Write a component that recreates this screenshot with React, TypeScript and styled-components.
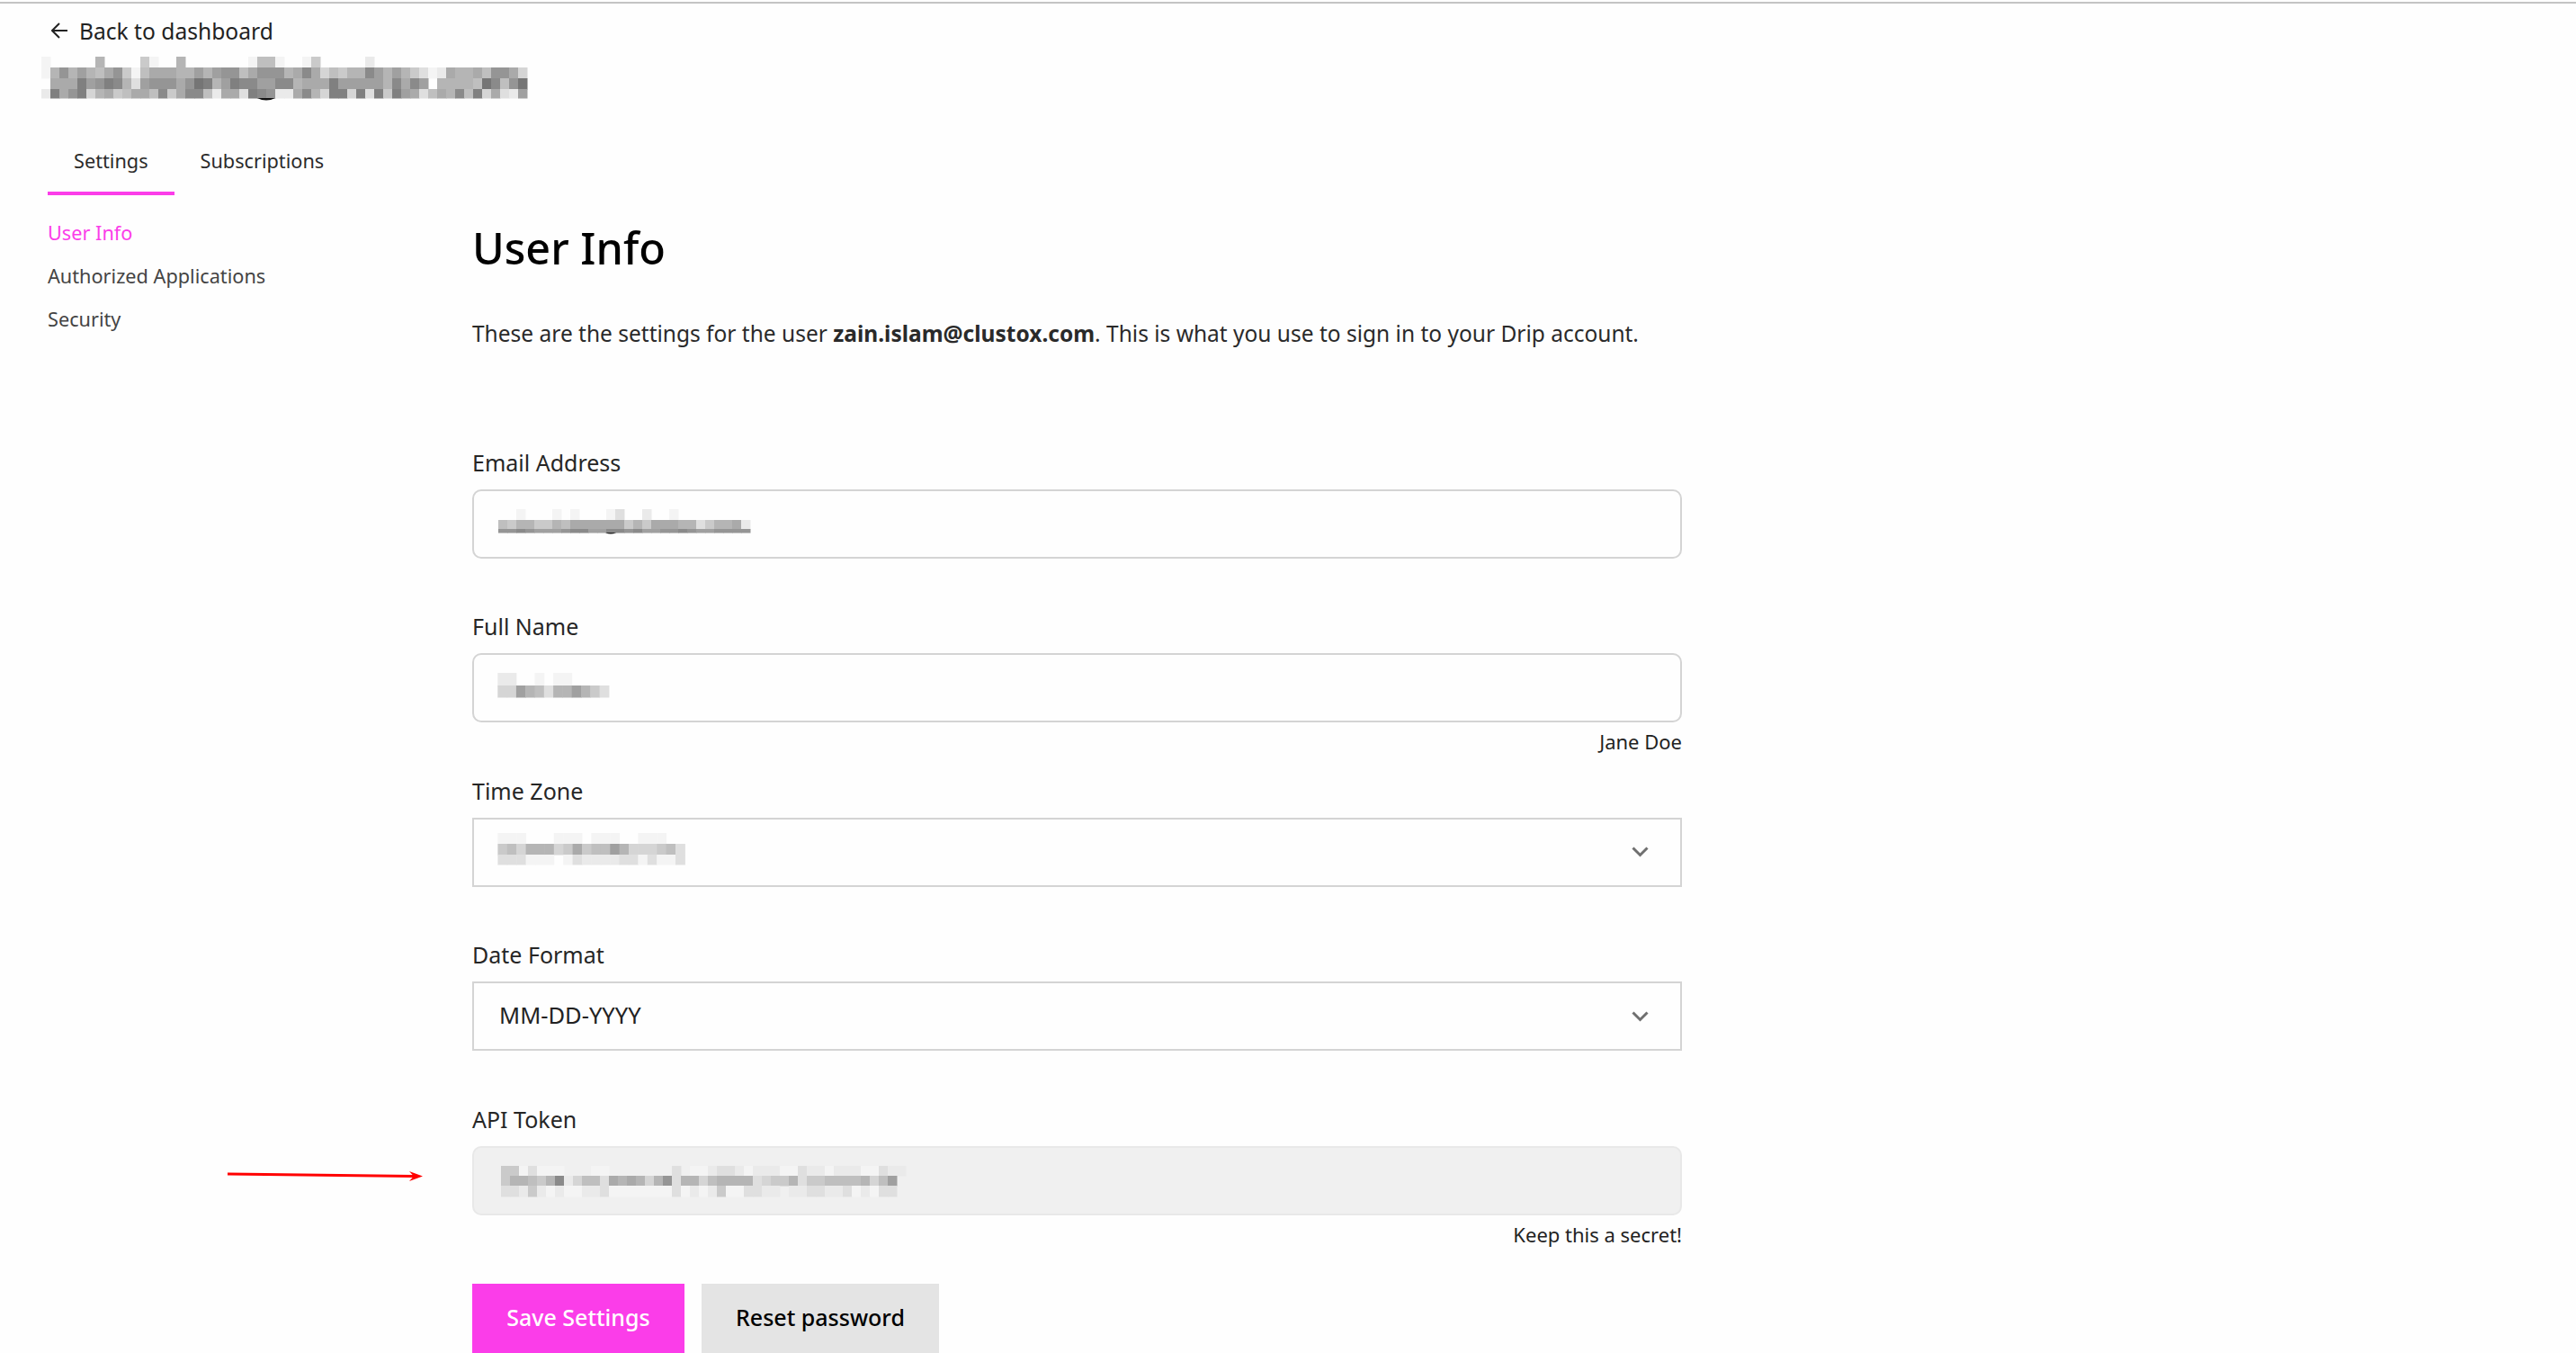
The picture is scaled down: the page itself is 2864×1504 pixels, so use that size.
import React from "react";
import styled, { createGlobalStyle } from "styled-components";

const PINK = "#fb3de9";
const FONT = `"Noto Sans", "Open Sans", sans-serif`;

const GlobalStyle = createGlobalStyle`
  html, body {
    margin: 0;
    padding: 0;
    background: #fefefe;
    font-family: ${FONT};
    color: #2a2a2a;
  }
`;

const Page = styled.div`
  position: relative;
  width: 2864px;
  height: 1504px;
  overflow: hidden;
  background: #fefefe;
`;

const TopRule = styled.div`
  margin-top: 2px;
  height: 2px;
  background: #c4c4c4;
`;

const Header = styled.header`
  padding-left: 53px;
`;

const BackLink = styled.a`
  display: flex;
  align-items: center;
  gap: 13px;
  height: 40px;
  margin-top: 10px;
  padding-left: 4px;
  font-size: 24.6px;
  color: #222;
`;

const UserMask = styled.div`
  width: 540px;
  height: 46px;
  margin: 9px 0 0 -7px;
`;

const MaskSvg = styled.svg`
  display: block;
  overflow: visible;
`;

const Tabs = styled.nav`
  display: flex;
  margin-top: 32px;
`;

const Tab = styled.a<{ $active?: boolean }>`
  display: flex;
  align-items: center;
  box-sizing: border-box;
  height: 76px;
  padding: 2px 29px 0;
  font-size: 21.7px;
  color: #2b2b2b;
  border-bottom: 4px solid ${(p) => (p.$active ? PINK : "transparent")};
`;

const Body = styled.div`
  display: grid;
  grid-template-columns: 472px 1345px;
  padding-left: 53px;
`;

const Sidebar = styled.aside`
  display: flex;
  flex-direction: column;
  padding-top: 17px;
`;

const SideItem = styled.a<{ $active?: boolean }>`
  display: flex;
  align-items: center;
  height: 48px;
  font-size: 21.7px;
  color: ${(p) => (p.$active ? PINK : "#444")};
`;

const Main = styled.main`
  display: flex;
  flex-direction: column;
`;

const Title = styled.h1`
  display: flex;
  align-items: center;
  height: 60px;
  margin: 28px 0 0;
  font-size: 48.5px;
  font-weight: 500;
  color: #000;
`;

const Lead = styled.p`
  display: flex;
  align-items: center;
  height: 40px;
  margin: 45px 0 105px;
  font-size: 24.5px;
  color: #2a2a2a;
  white-space: pre;

  strong {
    font-weight: 700;
  }
`;

const Field = styled.div`
  display: flex;
  flex-direction: column;
  height: 182.4px;
`;

const Label = styled.label`
  display: flex;
  align-items: center;
  box-sizing: border-box;
  height: 40px;
  margin-bottom: 9px;
  padding-bottom: 2px;
  font-size: 25px;
  color: #262626;
`;

const Control = styled.div<{ $square?: boolean; $disabled?: boolean }>`
  display: flex;
  align-items: center;
  justify-content: space-between;
  box-sizing: border-box;
  height: 77px;
  padding: 0 35px 0 28px;
  border: 2px solid ${(p) => (p.$disabled ? "#e8e8e8" : "#d4d4d4")};
  border-radius: ${(p) => (p.$square ? 0 : 10)}px;
  background: ${(p) => (p.$disabled ? "#f0f0f0" : "#fefefe")};
  font-size: 25.5px;
  color: #222;
`;

const DateValue = styled.span`
  padding-bottom: 3px;
`;

const MaskedValue = styled.div<{ $left: number; $top: number }>`
  align-self: flex-start;
  margin-left: ${(p) => p.$left}px;
  margin-top: ${(p) => p.$top}px;
`;

const Hint = styled.div`
  display: flex;
  align-items: center;
  justify-content: flex-end;
  height: 30px;
  margin-top: 6px;
  font-size: 22px;
  color: #222;
`;

const Actions = styled.div`
  display: flex;
  gap: 19px;
  margin-top: 20px;
`;

const Button = styled.button<{ $primary?: boolean; $w: number }>`
  box-sizing: border-box;
  width: ${(p) => p.$w}px;
  height: 80px;
  padding: 0 0 5px;
  border: 0;
  font-family: ${FONT};
  font-size: 25px;
  font-weight: 500;
  background: ${(p) => (p.$primary ? PINK : "#e4e4e4")};
  color: ${(p) => (p.$primary ? "#fff" : "#000")};
`;

const Annotation = styled.svg`
  position: absolute;
  left: 250px;
  top: 1298px;
`;

// each hex digit is one grey cell, f leaves the background showing
const shade = (d: string) => {
  const v = Math.round(96 + parseInt(d, 16) * 10.6);
  return `rgb(${v},${v},${v})`;
};

type MosaicProps = { rows: string[]; cell: number; heights: number[]; children?: React.ReactNode };

const Mosaic = ({ rows, cell, heights, children }: MosaicProps) => {
  const tops = heights.map((_, i) => heights.slice(0, i).reduce((a, b) => a + b, 0));
  return (
    <MaskSvg width={rows[0].length * cell} height={heights.reduce((a, b) => a + b, 0)}>
      {rows.map((row, y) =>
        row.split("").map((d, x) =>
          d === "f" ? null : (
            <rect key={`${x}-${y}`} x={x * cell} y={tops[y]} width={cell + 0.5} height={heights[y] + 0.5} fill={shade(d)} />
          )
        )
      )}
      {children}
    </MaskSvg>
  );
};

const userRows = [
  "efffff8ffffaeff8fffffffe99e" + "ffeafffffdfffffffffffffffff",
  "e85868975ae977788686" + "5597555" + "8747b9a884" + "6868aced78" + "879557b",
  "f777365348c655575238" + "6344664" + "4877736666" + "684746f888" + "8924952",
  "d3753b87a97794a7449d" + "77c345d" + "d748b33b3c" + "3a367c9784" + "93b7cd6",
];

const emailRows = [
  "fffffffffffffffffffffffffffffff",
  "fffefffefefffecffdffeffffffffff",
  "f9a88aa89777777a8a7778" + "8ca887dff",
  "f5545666544664454665545665555ff",
];

const nameRows = ["fddffefeeffffffff", "fbb689c8868acffff"];

const zoneRows = [
  "feeefffeeefeeeffeeeffff",
  "fa9b888ba7a9968bbba9cff",
  "fccceeefecddddcceceecff",
];

const tokenRows = [
  "aaeceeefffeefffffffcfeedccdedddeecddedddeecdd",
  "a889a84db99c7878b85c88b98888cbaa8caa99998b96f",
  "ccdadedeeddceeeeeeecededaeeccddfddccddcedeccf",
];

const Chevron = () => (
  <svg width="19" height="12" viewBox="0 0 19 12">
    <path d="M1.5 1.5l8 8 8-8" fill="none" stroke="#6f6f6f" strokeWidth="3" />
  </svg>
);

export default function App() {
  return (
    <Page>
      <GlobalStyle />
      <TopRule />
      <Header>
        <BackLink>
          <svg width="18" height="18" viewBox="0 0 18 18">
            <path d="M18 9H1M9 1L1 9l8 8" fill="none" stroke="#222" strokeWidth="2" />
          </svg>
          Back to dashboard
        </BackLink>
        <UserMask>
          <Mosaic rows={userRows} cell={10} heights={[12, 12, 12, 10]}>
            <path d="M240 46q10 5 20 0z" fill="#111" />
          </Mosaic>
        </UserMask>
        <Tabs>
          <Tab $active>Settings</Tab>
          <Tab>Subscriptions</Tab>
        </Tabs>
      </Header>
      <Body>
        <Sidebar>
          <SideItem $active>User Info</SideItem>
          <SideItem>Authorized Applications</SideItem>
          <SideItem>Security</SideItem>
        </Sidebar>
        <Main>
          <Title>User Info</Title>
          <Lead>
            These are the settings for the user <strong>zain.islam@clustox.com</strong>. This is what you use to sign in to your Drip account.
          </Lead>
          <Field>
            <Label>Email Address</Label>
            <Control>
              <MaskedValue $left={-11} $top={10}>
                <Mosaic rows={emailRows} cell={10} heights={[10, 12, 10, 4]}>
                  <path d="M129 36q6 3 12 0z" fill="#222" />
                </Mosaic>
              </MaskedValue>
            </Control>
          </Field>
          <Field>
            <Label>Full Name</Label>
            <Control>
              <MaskedValue $left={-12} $top={20}>
                <Mosaic rows={nameRows} cell={10.3} heights={[14, 13]} />
              </MaskedValue>
            </Control>
            <Hint>Jane Doe</Hint>
          </Field>
          <Field>
            <Label>Time Zone</Label>
            <Control $square>
              <MaskedValue $left={-12} $top={15}>
                <Mosaic rows={zoneRows} cell={10.4} heights={[12, 12, 11]} />
              </MaskedValue>
              <Chevron />
            </Control>
          </Field>
          <Field>
            <Label>Date Format</Label>
            <Control $square>
              <DateValue>MM-DD-YYYY</DateValue>
              <Chevron />
            </Control>
          </Field>
          <Field>
            <Label>API Token</Label>
            <Control $disabled>
              <MaskedValue $left={2} $top={20}>
                <Mosaic rows={tokenRows} cell={10} heights={[11, 11, 12]} />
              </MaskedValue>
            </Control>
            <Hint>Keep this a secret!</Hint>
          </Field>
          <Actions>
            <Button $primary $w={236}>Save Settings</Button>
            <Button $w={264}>Reset password</Button>
          </Actions>
        </Main>
      </Body>
      <Annotation width="224" height="20" viewBox="250 1298 224 20">
        <path d="M253 1305L460 1307.5" stroke="#f00" strokeWidth="3" fill="none" />
        <path d="M455 1302L470 1307.5L455 1313L460 1307.5z" fill="#f00" />
      </Annotation>
    </Page>
  );
}
